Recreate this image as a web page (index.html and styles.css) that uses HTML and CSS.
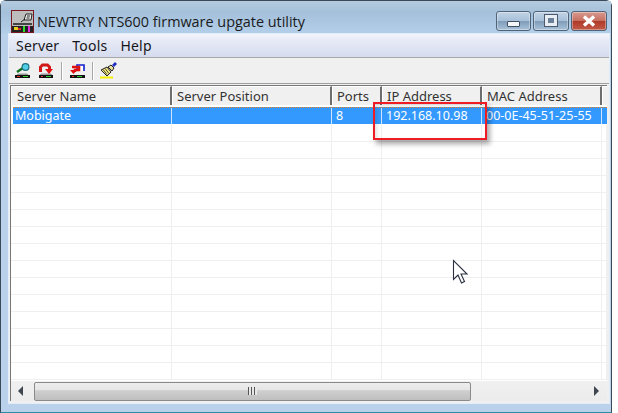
FILE: index.html
```html
<!DOCTYPE html>
<html lang="en">
<head>
<meta charset="utf-8">
<title>NEWTRY NTS600 firmware upgate utility</title>
<link rel="stylesheet" href="styles.css">
</head>
<body>
<div class="window">
  <div class="titlebar">
    <svg class="appicon" width="23" height="23" viewBox="0 0 23 23">
      <rect x="0.500" y="0.500" width="22" height="22" fill="#bdbdbd" stroke="#7a1a20"/>
      <path d="M13 10l2-6h6l-1 6z" fill="#eee" stroke="#222"/>
      <path d="M16 6h3M15.500 8h3M10 12l4-3" stroke="#222"/>
      <rect x="2" y="13" width="19" height="2" fill="#444"/>
      <rect x="1" y="16" width="21" height="6" fill="#222"/>
      <rect x="3" y="17" width="4" height="3" fill="#e8d020"/>
      <rect x="7" y="18" width="3" height="2" fill="#e03030"/>
      <rect x="12" y="16" width="2" height="6" fill="#30e030"/>
      <rect x="17" y="16" width="2" height="6" fill="#e030e0"/>
    </svg>
    <span class="title">NEWTRY NTS600 firmware upgate utility</span>
    <div class="caption">
      <div class="capbtn minbtn"><span class="minglyph"></span></div>
      <div class="capbtn maxbtn"><span class="maxglyph"></span></div>
      <div class="capbtn closebtn">
        <svg width="14" height="12" viewBox="0 0 14 12"><path d="M2 1.500l10 9M12 1.500l-10 9" stroke="#fff" stroke-width="3.400" fill="none"/></svg>
      </div>
    </div>
  </div>
  <div class="client">
    <nav class="menubar">
      <span class="menuitem">Server</span>
      <span class="menuitem">Tools</span>
      <span class="menuitem">Help</span>
    </nav>
    <div class="toolbar">
      <svg class="tool" width="16" height="16" viewBox="0 0 16 16">
        <path d="M3 10.500h9l2 2H1z" fill="#999"/>
        <path d="M2 9l6-4" stroke="#107020" stroke-width="2.400"/>
        <circle cx="10.500" cy="4" r="3.400" fill="#50d0e8" stroke="#207080" stroke-width="1.200"/>
        <rect x="0" y="12" width="15" height="3" fill="#111"/>
        <rect x="2" y="13" width="3" height="1" fill="#e03030"/><rect x="8" y="13" width="5" height="1" fill="#30d030"/>
      </svg>
      <svg class="tool" width="16" height="16" viewBox="0 0 16 16">
        <path d="M3 10.500h10l2 2H1z" fill="#999"/>
        <path d="M2.500 9V4l2-2h5l2 2v3" fill="none" stroke="#d01818" stroke-width="3"/>
        <path d="M7 6h8l-4 5z" fill="#e01010"/>
        <rect x="1" y="12" width="14" height="3" fill="#111"/>
        <rect x="3" y="13" width="2" height="1" fill="#e03030"/><rect x="8" y="13" width="5" height="1" fill="#30d030"/>
      </svg>
      <span class="sep"></span>
      <svg class="tool" width="15" height="16" viewBox="0 0 15 16">
        <path d="M7 8V2h7v6" fill="#fff" stroke="#1020d0" stroke-width="1.600"/>
        <path d="M2 4h7v3H5v2" fill="none" stroke="#e01010" stroke-width="2.600"/>
        <path d="M0 7h7l-3.500 4z" fill="#e01010"/>
        <rect x="0" y="12" width="15" height="3" fill="#111"/>
        <rect x="2" y="13" width="2" height="1" fill="#e03030"/><rect x="7" y="13" width="5" height="1" fill="#30d030"/>
      </svg>
      <span class="sep"></span>
      <svg class="tool broom" width="17" height="17" viewBox="0 0 17 17">
        <path d="M0 15.500h13" stroke="#f4f000" stroke-width="2"/>
        <path d="M1 8l6-3 4 5-4 4z" fill="#f4e880" stroke="#222"/>
        <path d="M8 5l3-2 3 3-2 3z" fill="#e8e0a0" stroke="#222"/>
        <path d="M12 3l3-3 2 2-3 3z" fill="#2030c0"/>
        <path d="M3 7.500l4 5M5 6.500l4 5" stroke="#222" stroke-width=".800"/>
      </svg>
    </div>
    <div class="list">
      <div class="row header">
        <span class="cell c1">Server Name</span>
        <span class="cell c2">Server Position</span>
        <span class="cell c3">Ports</span>
        <span class="cell c4">IP Address</span>
        <span class="cell c5">MAC Address</span>
        <span class="cell c6"></span>
      </div>
      <div class="rows">
        <div class="row item selected">
          <span class="cell c1">Mobigate</span><span class="cell c2"></span><span class="cell c3">8</span><span class="cell c4">192.168.10.98</span><span class="cell c5">00-0E-45-51-25-55</span><span class="cell c6"></span>
        </div>
        <div class="row item"><span class="cell c1"></span><span class="cell c2"></span><span class="cell c3"></span><span class="cell c4"></span><span class="cell c5"></span><span class="cell c6"></span></div>
        <div class="row item"><span class="cell c1"></span><span class="cell c2"></span><span class="cell c3"></span><span class="cell c4"></span><span class="cell c5"></span><span class="cell c6"></span></div>
        <div class="row item"><span class="cell c1"></span><span class="cell c2"></span><span class="cell c3"></span><span class="cell c4"></span><span class="cell c5"></span><span class="cell c6"></span></div>
        <div class="row item"><span class="cell c1"></span><span class="cell c2"></span><span class="cell c3"></span><span class="cell c4"></span><span class="cell c5"></span><span class="cell c6"></span></div>
        <div class="row item"><span class="cell c1"></span><span class="cell c2"></span><span class="cell c3"></span><span class="cell c4"></span><span class="cell c5"></span><span class="cell c6"></span></div>
        <div class="row item"><span class="cell c1"></span><span class="cell c2"></span><span class="cell c3"></span><span class="cell c4"></span><span class="cell c5"></span><span class="cell c6"></span></div>
        <div class="row item"><span class="cell c1"></span><span class="cell c2"></span><span class="cell c3"></span><span class="cell c4"></span><span class="cell c5"></span><span class="cell c6"></span></div>
        <div class="row item"><span class="cell c1"></span><span class="cell c2"></span><span class="cell c3"></span><span class="cell c4"></span><span class="cell c5"></span><span class="cell c6"></span></div>
        <div class="row item"><span class="cell c1"></span><span class="cell c2"></span><span class="cell c3"></span><span class="cell c4"></span><span class="cell c5"></span><span class="cell c6"></span></div>
        <div class="row item"><span class="cell c1"></span><span class="cell c2"></span><span class="cell c3"></span><span class="cell c4"></span><span class="cell c5"></span><span class="cell c6"></span></div>
        <div class="row item"><span class="cell c1"></span><span class="cell c2"></span><span class="cell c3"></span><span class="cell c4"></span><span class="cell c5"></span><span class="cell c6"></span></div>
        <div class="row item"><span class="cell c1"></span><span class="cell c2"></span><span class="cell c3"></span><span class="cell c4"></span><span class="cell c5"></span><span class="cell c6"></span></div>
        <div class="row item"><span class="cell c1"></span><span class="cell c2"></span><span class="cell c3"></span><span class="cell c4"></span><span class="cell c5"></span><span class="cell c6"></span></div>
        <div class="row item"><span class="cell c1"></span><span class="cell c2"></span><span class="cell c3"></span><span class="cell c4"></span><span class="cell c5"></span><span class="cell c6"></span></div>
        <div class="row item"><span class="cell c1"></span><span class="cell c2"></span><span class="cell c3"></span><span class="cell c4"></span><span class="cell c5"></span><span class="cell c6"></span></div>
      </div>
      <div class="scrollbar">
        <span class="arrow arrow-left"></span>
        <div class="thumb"><span class="grip"></span></div>
        <span class="arrow arrow-right"></span>
      </div>
    </div>
  </div>
</div>
<div class="highlight"></div>
<svg class="cursor" width="18" height="26" viewBox="0 0 18 26">
  <path d="M1.500 1.500v19l4.500-4.500 3.500 8 3-1.500-3.500-7.500h6z" fill="#fff" stroke="#2a3040" stroke-width="1.100"/>
</svg>
</body>
</html>
```
FILE: styles.css
```css
* { box-sizing: border-box; }
html, body { margin: 0; padding: 0; background: #fff; }
body { width: 618px; height: 413px; position: relative; overflow: hidden; font-family: "Noto Sans", Tahoma, sans-serif; }
.window {
  width: 612px; height: 413px;
  border: 1px solid #3a4a58; border-bottom-color: #2e8ea0; border-top-left-radius: 6px; border-top-right-radius: 6px;
  background: #b9d1ea;
  display: flex; flex-direction: column;
  padding: 0 2px 9px 8px;
}
.titlebar {
  height: 33px; flex: none; margin: 0 -2px 0 -8px; padding: 7px 4px 0 10px;
  background: linear-gradient(180deg, #b4cbdf 0%, #a4c0da 35%, #b3cfe9 100%);
  display: flex; align-items: flex-start; gap: 3px;
}
.appicon { flex: none; margin-top: 2px; }
.title { font-family: "Open Sans", sans-serif; font-size: 14.400px; color: #1a1a20; line-height: 28px; flex: 1; white-space: nowrap; }
.caption { display: flex; gap: 2px; margin-top: 3px; }
.capbtn { height: 20px; border: 1px solid #4f6478; border-radius: 3px; display: flex; align-items: center; justify-content: center; box-shadow: inset 0 0 0 1px rgba(255,255,255,.35); }
.minbtn { width: 35px; background: linear-gradient(180deg, #c2d4e6 0%, #a6bfd7 50%, #7f9cb8 52%, #a9c2da 100%); }
.maxbtn { width: 36px; background: linear-gradient(180deg, #c2d4e6 0%, #a6bfd7 50%, #7f9cb8 52%, #a9c2da 100%); }
.closebtn { width: 36px; background: linear-gradient(180deg, #d89a90 0%, #c76f60 48%, #b03a28 52%, #c25a48 100%); }
.minglyph { width: 13px; height: 6px; margin-top: 6px; background: #f4f6f8; border: 1px solid #3e4e60; border-radius: 1px; }
.maxglyph { width: 12px; height: 11px; border: 3px solid #e8eef4; outline: 1px solid #4a5a6c; margin-top: -2px; background: #6a8098; }
.client { flex: 1; min-height: 0; background: #f0f0f0; display: flex; flex-direction: column; box-shadow: 0 0 0 1px rgba(255,255,255,.6); }
.menubar {
  height: 24px; flex: none; display: flex; gap: 13px; padding-left: 7px; align-items: center;
  background: linear-gradient(180deg, #f3f5fb 0%, #e6eaf6 30%, #d6dcee 100%);
  border-bottom: 1px solid #a8a8a8;
}
.menuitem { font-size: 14px; letter-spacing: .2px; color: #15151a; }
.toolbar { height: 26px; flex: none; display: flex; align-items: center; gap: 7px; padding-left: 6px; background: #f0f0f0; border-bottom: 1px solid #a0a0a0; }
.tool { flex: none; }
.broom { margin-left: -1px; }
.sep { width: 1px; height: 18px; background: #a8a8a8; border-right: 1px solid #fff; box-sizing: content-box; }
.list { flex: 1; min-height: 0; margin: 1px 2px 2px 1px; border-left: 1px solid #777; border-top: 1px solid #777; background: #fff; display: flex; flex-direction: column; }
.rows { flex: 1; min-height: 0; overflow: hidden; background: #fff; }
.row { display: flex; }
.cell { flex: none; padding-left: 5px; white-space: nowrap; overflow: hidden; }
.c1 { width: 161px; }
.c2 { width: 160px; }
.c3 { width: 50px; }
.c4 { width: 100px; }
.c5 { width: 120px; }
.c6 { width: 5px; padding: 0; }
.header { height: 21px; flex: none; border-bottom: 2px solid #fff; }
.header .cell { height: 19px; background: #f0f0f0; font-size: 13px; line-height: 18px; color: #333; border-right: 2px solid #6e6e6e; border-top: 1px solid #fff; border-left: 1px solid #fff; }
.header .c2, .header .c3, .header .c4, .header .c5 { padding-left: 4px; }
.header .c6 { border-right: 0; }
.item { height: 17px; border-bottom: 1px solid #efefef; }
.item .cell { height: 16px; font-size: 12.500px; line-height: 16px; border-right: 1px solid #efefef; padding-left: 4px; }
.selected { background: #3399ff; margin-left: 2px; height: 18px; border-top: 1px dotted #e8802a; border-bottom-color: #fff; }
.selected .cell { color: #fff; border-right-color: #cfe4fa; }
.selected .c1 { width: 159px; padding-left: 2px; }
.selected .c6 { border-right: 0; }
.scrollbar { height: 20px; flex: none; display: flex; align-items: center; background: linear-gradient(180deg, #f0f0f0, #ececec); }
.arrow { flex: none; width: 0; height: 0; border-style: solid; border-color: transparent; }
.arrow-left { border-width: 5px 5px 5px 0; border-right-color: #3f4650; margin: 0 11px 0 7px; }
.arrow-right { border-width: 5px 0 5px 5px; border-left-color: #3f4650; margin-left: 123px; }
.thumb { width: 437px; height: 19px; flex: none; border: 1px solid #8a8a8a; border-radius: 2px; background: linear-gradient(180deg, #ededed 0%, #e6e6e6 40%, #cfcfcf 45%, #bfbfbf 100%); display: flex; align-items: center; justify-content: center; }
.grip { width: 9px; height: 8px; background: repeating-linear-gradient(90deg, #555 0 1px, #e8e8e8 1px 3px); }
.highlight { position: absolute; left: 373px; top: 102px; width: 114px; height: 38px; border: 2px solid #ee1c25; box-shadow: 3px 4px 5px rgba(0,0,0,.35), inset 2px 2px 4px rgba(0,0,0,.12); }
.cursor { position: absolute; left: 452px; top: 259px; }
```
